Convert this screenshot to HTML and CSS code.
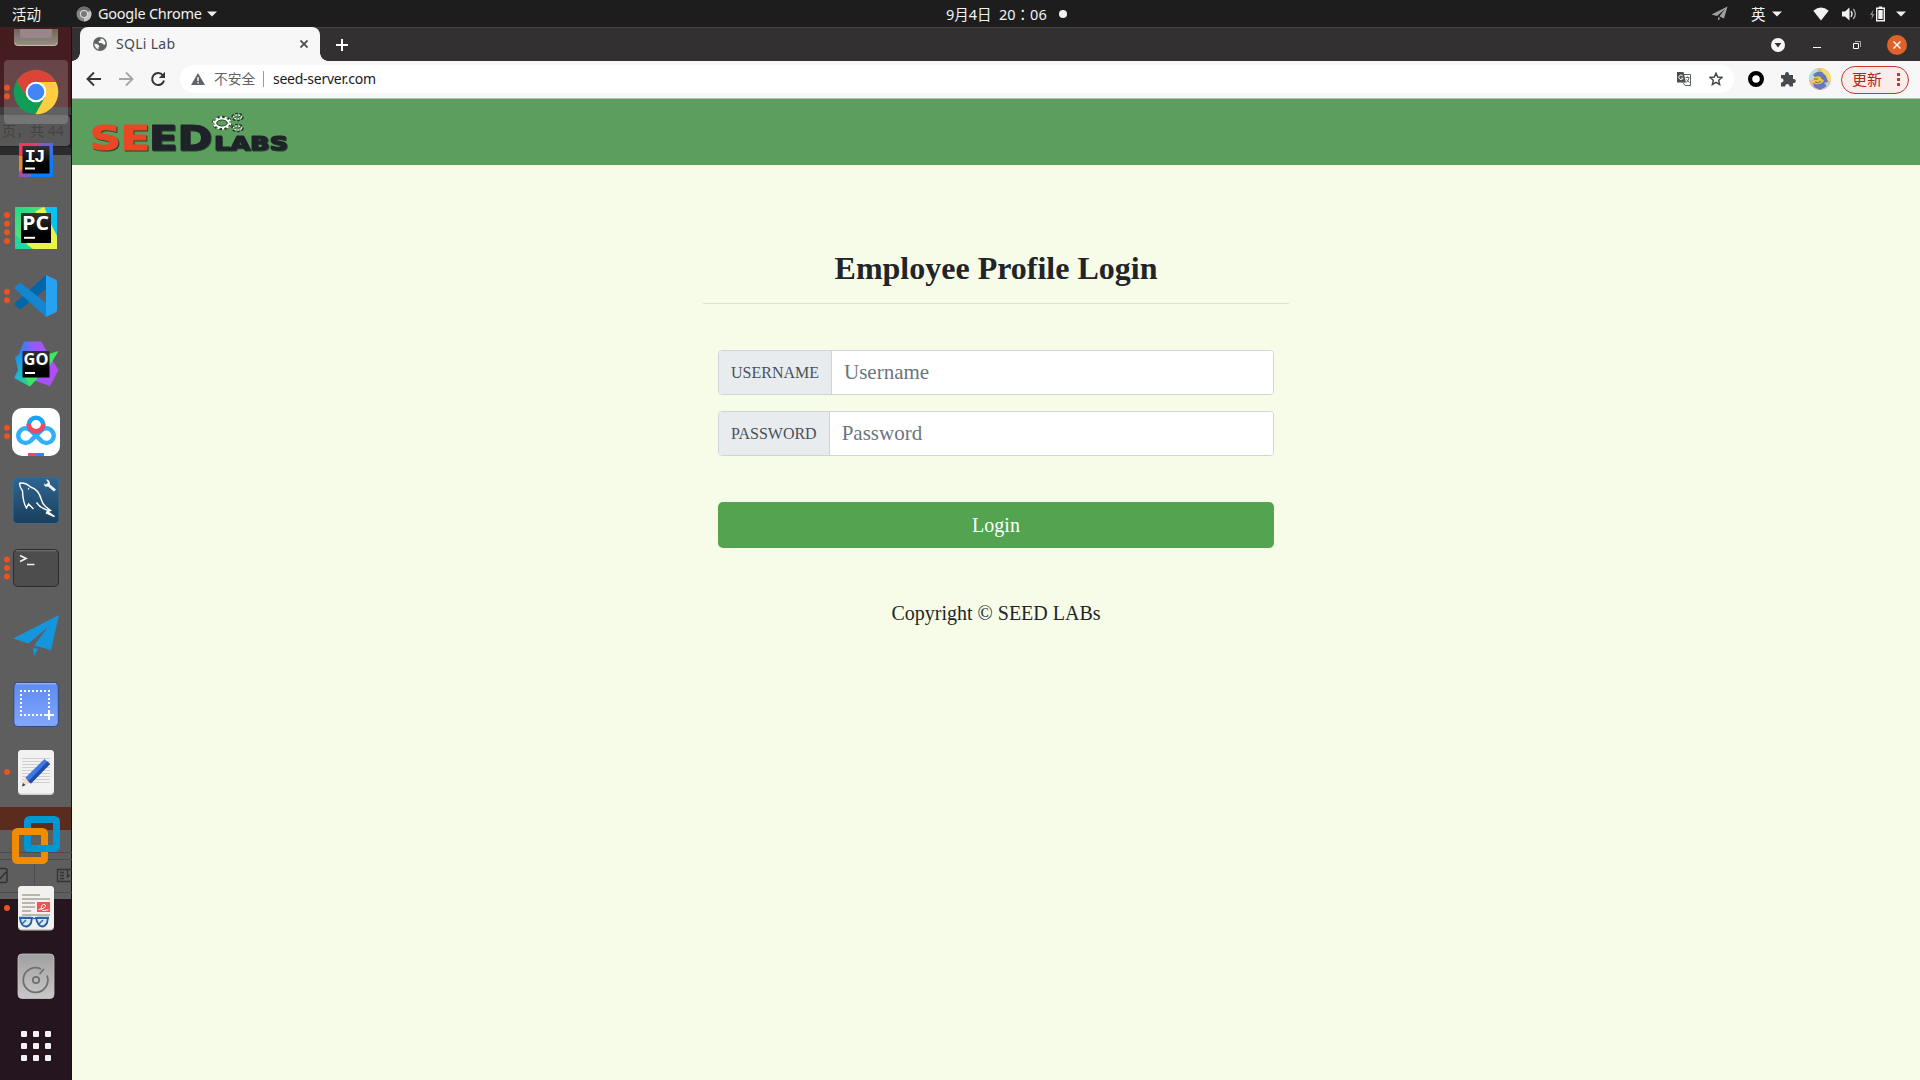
FILE: index.html
```html
<!DOCTYPE html>
<html lang="zh-CN">
<head>
<meta charset="utf-8">
<title>SQLi Lab</title>
<link rel="stylesheet" href="styles.css">
</head>
<body>
<div class="desktop">
  <header class="topbar">
    <div class="topbar-left">
      <span class="activities">活动</span>
      <svg class="app-icon" width="16" height="16" viewBox="0 0 16 16"><circle cx="8" cy="8" r="7.5" fill="#858585"/><path d="M8 8 14.7 4.8A7.5 7.5 0 0 1 8 15.5Z" fill="#c4c4c4"/><path d="M1.5 4.5A7.5 7.5 0 0 1 14.7 4.8H8Z" fill="#6c6c6c"/><circle cx="8" cy="8" r="4" fill="#ddd"/><circle cx="8" cy="8" r="3" fill="#777"/></svg>
      <span class="app-name">Google Chrome</span>
      <svg class="caret" width="10" height="6" viewBox="0 0 10 6"><path d="M0 .5h10L5 5.5z" fill="#f2f2f2"/></svg>
    </div>
    <div class="clock"><span class="date">9月4日</span><span class="time">20：06</span><i class="notice"></i></div>
    <div class="topbar-right">
      <svg width="17" height="15" viewBox="0 0 17 15"><path d="M.5 8.500 16.500.5 13 12.500 8.500 10.200 14 3 6 10Z" fill="#a0a0a0"/><path d="m7 11 2.300 1.200L7.200 14.500Z" fill="#a0a0a0"/></svg>
      <span class="ime">英</span>
      <svg class="caret" width="10" height="6" viewBox="0 0 10 6"><path d="M0 .5h10L5 5.500z" fill="#f2f2f2"/></svg>
      <svg class="wifi" width="16" height="14" viewBox="0 0 16 14"><path d="M.3 3.800Q8-2.800 15.700 3.800L8 13.500Z" fill="#f2f2f2"/></svg>
      <svg class="volume" width="15" height="14" viewBox="0 0 15 14"><path d="M0 4.500h3L7.500.5v13L3 9.500H0z" fill="#f2f2f2"/><path d="M9 4.200q2 2.800 0 5.600" fill="none" stroke="#f2f2f2" stroke-width="1.300"/><path d="M11.300 2q4 5 0 10" fill="none" stroke="#aaa" stroke-width="1.300"/></svg>
      <svg class="battery" width="15" height="16" viewBox="0 0 15 16"><path d="M3.500 3.500 0 9h2l-.5 4.500L4.500 8h-2z" fill="#888"/><path d="M6.700 2.300h7.600v12.500H6.700zM8.800 1.200h3.400" fill="none" stroke="#f2f2f2" stroke-width="1.400"/><path d="M8.300 4h4.400v9H8.300z" fill="#f2f2f2"/></svg>
      <svg class="caret end" width="10" height="6" viewBox="0 0 10 6"><path d="M0 .5h10L5 5.500z" fill="#f2f2f2"/></svg>
    </div>
  </header>

  <div class="workspace">
    <nav class="dock">
      <div class="dock-backdrop">
        <div class="band band-red"></div>
        <div class="band band-dark"></div>
        <div class="band band-page">页，共 44</div>
        <div class="band band-edge"></div>
        <div class="band band-grey"></div>
        <div class="band band-brown"></div>
        <div class="band band-tools"><svg width="72" height="69" viewBox="0 0 72 69"><path d="M0 22.500h72M0 29.500h72M0 62.500h72M34.500 30v32" stroke="#4d4d4d"/><path d="M0 38.500h5q2 0 2 2v10q0 2-2 2H0M0 49l6-7" fill="none" stroke="#333" stroke-width="1.500"/><path d="M72 39.500H57.500v12H72M60 42.500h4m-4 3h4m-4 3h4M67.500 40v7l2.500-2" fill="none" stroke="#333" stroke-width="1.300"/></svg></div>
      </div>
      <svg class="dock-cut" width="72" height="31" viewBox="0 0 72 31"><defs><linearGradient id="drive" y2="1" x2="0"><stop stop-color="#70645c"/><stop offset="1" stop-color="#9a9083"/></linearGradient></defs><path d="M14 2h44v13q0 4-4 4H18q-4 0-4-4z" fill="url(#drive)"/><path d="M15 16q1 2.500 3 2.500h36q2 0 3-2.500" fill="none" stroke="#c4bbae"/><path d="M20 2h32v6q0 3-3 3H23q-3 0-3-3z" fill="#98868a"/></svg>
      <svg class="dock-item" viewBox="0 0 72 68"><rect x="4" y="2" width="64" height="64" rx="4" fill="#fff" fill-opacity=".18"/><circle cx="36" cy="34" r="22.300" fill="#109d58"/><path d="M16.700 23A22.300 22.300 0 0 1 55.300 23H36L27 39Z" fill="#db4437"/><path d="M36 24h19.900A22.300 22.300 0 0 1 35.500 56.300L45 39Z" fill="#ffcd40"/><circle cx="36" cy="34" r="10.300" fill="#fff"/><circle cx="36" cy="34" r="8.300" fill="#4285f4"/><g class="running"><circle cx="7" cy="29.700" r="3"/><circle cx="7" cy="38.300" r="3"/></g></svg>
      <svg class="dock-item" viewBox="0 0 72 68"><defs><linearGradient id="ij" x2="1" y2=".6"><stop offset=".25" stop-color="#fe315d"/><stop offset=".6" stop-color="#765fcb"/><stop offset="1" stop-color="#087cfa"/></linearGradient><linearGradient id="ink" x2="0" y2="1"><stop stop-color="#333"/><stop offset=".7" stop-color="#000"/></linearGradient></defs><path d="M19 17h34v34H19z" fill="url(#ij)"/><path d="M19 30h5v12l-5 4z" fill="#e28b35"/><path d="M46 32h7v19H30z" fill="#087cfa"/><path d="M22.500 20h27v27.500h-27z" fill="url(#ink)"/><text x="24.500" y="35.500" class="mono-mark">IJ</text><path d="M25 42.500h10" stroke="#fff" stroke-width="2"/></svg>
      <svg class="dock-item" viewBox="0 0 72 68"><defs><linearGradient id="pc" x2="1" y2="1"><stop stop-color="#21d789"/><stop offset=".55" stop-color="#68e173"/><stop offset=".6" stop-color="#fcf84a"/><stop offset="1" stop-color="#e6f94c"/></linearGradient></defs><path d="M15 13h42v42H15z" fill="url(#pc)"/><path d="m36 17 8-4 8 18 5 10v14H28z" fill="#e9f34b"/><path d="M45 13h12v29L50 28z" fill="#07c3f2"/><path d="M15 40l6 6 12 9H15z" fill="#21d7a0"/><path d="M21 19h30v30H21z" fill="url(#ink)"/><text x="22" y="36" class="sans-mark" font-size="19" textLength="27" lengthAdjust="spacingAndGlyphs">PC</text><path d="M24 43.800h11" stroke="#fff" stroke-width="2"/><g class="running"><circle cx="7" cy="21" r="3"/><circle cx="7" cy="29.700" r="3"/><circle cx="7" cy="38.300" r="3"/><circle cx="7" cy="47" r="3"/></g></svg>
      <svg class="dock-item" viewBox="0 0 72 68"><path d="m15 43 4 3.500q1.200.8 2.500 0L46 27V13L15.500 40.500q-1.200 1.200-.5 2.500z" fill="#0065a9"/><path d="m15 25 4-3.500q1.200-.8 2.500 0L46 41v14L15.500 27.500q-1.200-1.200-.5-2.500z" fill="#1485cf"/><path d="m46 13 9.500 4.500q1.500.8 1.500 2.500v28q0 1.700-1.500 2.500L46 55z" fill="#27a1f2"/><g class="running"><circle cx="7" cy="29.700" r="3"/><circle cx="7" cy="38.300" r="3"/></g></svg>
      <svg class="dock-item" viewBox="0 0 72 68"><defs><linearGradient id="go" x2="1" y2="0"><stop stop-color="#078efc"/><stop offset=".45" stop-color="#9a59fc"/><stop offset="1" stop-color="#b74af7"/></linearGradient><linearGradient id="goleft" x2="1" y2="1"><stop stop-color="#1a84f8"/><stop offset=".45" stop-color="#1fb8c8"/><stop offset="1" stop-color="#3bea62"/></linearGradient></defs><path d="M24 11.500h17.500L47 22l11.500 18-8.500 16-17-6-12-8-6-14 4-4z" fill="url(#go)"/><path d="m15 27 7-4 1 24h14l-7 9.500-16-8.500 4-8z" fill="url(#goleft)"/><path d="m49 24 9.500-3L49.500 36 45 36zM25 47.500h13.500L30 56z" fill="#3bea62"/><path d="M22.500 21h27v26.500h-27z" fill="url(#ink)"/><text x="23.500" y="35" class="sans-mark" font-size="15.500" textLength="25" lengthAdjust="spacingAndGlyphs">GO</text><path d="M25 43h10" stroke="#fff" stroke-width="2"/></svg>
      <svg class="dock-item" viewBox="0 0 72 68"><rect x="12" y="10" width="48" height="48" rx="10" fill="#fff"/><g fill="none" stroke-width="4.500"><path d="M30.800 42.700A7.300 7.300 0 1 1 31 32.800L41.200 42.700A7.300 7.300 0 1 0 41 32.800L30.800 42.700" stroke="#2eb0fb"/><circle cx="36" cy="27" r="7.300" stroke="#16a4f8"/><path d="M28.700 26a7.300 7.300 0 0 0 14.600 0" stroke="#ef4765"/></g><path d="M28 55h8v3h-8z" fill="#ef4765"/><path d="M36 55h8v3h-8z" fill="#2b87ff"/><g class="running"><circle cx="7" cy="29.700" r="3"/><circle cx="7" cy="38.300" r="3"/></g></svg>
      <svg class="dock-item" viewBox="0 0 72 68"><defs><linearGradient id="sql" x2="0" y2="1"><stop stop-color="#2f6591"/><stop offset="1" stop-color="#193f5c"/></linearGradient></defs><rect x="13" y="11.500" width="46" height="46" rx="4" fill="url(#sql)" stroke="#3a6c91"/><path d="M19.500 17q7-.5 11 4 8 2 11 13 1 4 4 6.500l5 4-3 1 7 5-8-3.500 2-2.500q-8-2-12-8M19.500 17q0 4 3 8 .5 12 4 17l2-4 5 5M28 22.500l1 .5" fill="none" stroke="#fff" stroke-width="1.400"/><path d="m46 13.500 2 3-2 2-2-1q0 4 4 3l6 5 2-2-6-5q0-5-4-5z" fill="#f4f4f4"/></svg>
      <svg class="dock-item" viewBox="0 0 72 68"><rect x="13.500" y="15.500" width="45" height="37" rx="4" fill="#4d4d4d" stroke="#2c2c2c"/><path d="M16 16.800h40" stroke="#777"/><path d="m20 21.500 6 3-6 3M27 30.500h7.500" fill="none" stroke="#f0f0f0" stroke-width="1.700"/><g class="running"><circle cx="7" cy="25.500" r="3"/><circle cx="7" cy="34" r="3"/><circle cx="7" cy="42.500" r="3"/></g></svg>
      <svg class="dock-item" viewBox="0 0 72 68"><path d="M13 36.500 59 13 51 48 34 43.500 48 25 28.500 41.500ZM33 45.500l5 1.500-4 7.500z" fill="#1595db"/></svg>
      <svg class="dock-item" viewBox="0 0 72 68"><defs><linearGradient id="shot" x2="0" y2="1"><stop stop-color="#5d8bf0"/><stop offset="1" stop-color="#83a7ff"/></linearGradient></defs><rect x="13.800" y="12.500" width="44.500" height="44" rx="4" fill="url(#shot)" stroke="#34497c"/><path d="M16 13.800h40" stroke="#a9c1f8"/><path d="M20 21h30M21 24v22M20 45h24M49 24v16" fill="none" stroke="#fff" stroke-width="2" stroke-dasharray="2 2"/><path d="M44 45h10M49 40v10" stroke="#fff" stroke-width="2"/></svg>
      <svg class="dock-item" viewBox="0 0 72 68"><rect x="18" y="12" width="36" height="45" rx="4" fill="#d0d0d0"/><rect x="18" y="12" width="36" height="43.500" rx="4" fill="#f2f2f2"/><path d="M22 20.500h28m-28 3h28m-28 3h28m-28 3h28m-28 3h28m-28 3h28m-28 3h28m-28 3h28m-28 3h28" stroke="#cfcfcf"/><path d="m22 48.500 3-10 7 6z" fill="#fbdcc0"/><path d="m22 48.500 1-3.500 2.500 2z" fill="#333"/><path d="M25.500 39.500 44.500 21l5.500 5-19 19.500-2-1z" fill="#3f78e0"/><path d="M28.500 43 47.500 23.500l2.500 2.500-19 19.500z" fill="#214cae"/><g class="running"><circle cx="7" cy="34" r="3"/></g></svg>
      <svg class="dock-item" viewBox="0 0 72 68"><g fill="none" stroke-width="7"><rect x="27.500" y="13.500" width="29" height="29" rx="2" stroke="#0095d3"/><rect x="15.500" y="25.500" width="29" height="29" rx="2" stroke="#f38b00"/><path d="M27.500 29v11.500q0 2 2 2H48.500" stroke="#0095d3"/></g></svg>
      <svg class="dock-item" viewBox="0 0 72 68"><rect x="18" y="12" width="36" height="44.500" rx="4" fill="#c9c9c9"/><rect x="18" y="12" width="36" height="43" rx="4" fill="#f2f1ef"/><path d="M22 21h18M22 25h28M22 29h13M22 33h13M22 37h9M22 41h28" stroke="#bbb6a9" stroke-width="1.800"/><path d="M37 28h13v10H37z" fill="#ed5353"/><path d="M38.500 35.500q7.500-1 7-4.500-2.500-2-4 1-1.500 5 3 4.500l4-1" fill="none" stroke="#fff"/><path d="M20 44h12l-1 5q-2 3.500-5 3.500-5 0-6-8.500zM36 44h12l-1 5q-2 3.500-5 3.500-4 0-6-8.500z" fill="#dfe5e8" stroke="#1f5da5" stroke-width="1.800"/><path d="M19 43.500h12q3 2 6 0h12M22 50l4-4M39 50l4-4" fill="none" stroke="#2b6ab0" stroke-width="1.500"/><g class="running"><circle cx="7" cy="34" r="3"/></g></svg>
      <svg class="dock-item" viewBox="0 0 72 68"><defs><linearGradient id="disk" x2="0" y2="1"><stop stop-color="#a0a0a0"/><stop offset="1" stop-color="#c8c8c8"/></linearGradient></defs><rect x="18" y="12" width="36" height="44.500" rx="4" fill="url(#disk)" stroke="#c5c5c5" stroke-width=".8"/><path d="M41 27a12.300 12.300 0 1 0 6 6.500M39.500 32l4.500-5" fill="none" stroke="#707070" stroke-width="1.800"/><circle cx="36" cy="38" r="3.200" fill="none" stroke="#707070" stroke-width="1.800"/></svg>
      <svg class="dock-item" viewBox="0 0 72 68"><g fill="#f2f2f2"><rect x="21" y="21" width="6" height="6" rx="1"/><rect x="33" y="21" width="6" height="6" rx="1"/><rect x="45" y="21" width="6" height="6" rx="1"/><rect x="21" y="33" width="6" height="6" rx="1"/><rect x="33" y="33" width="6" height="6" rx="1"/><rect x="45" y="33" width="6" height="6" rx="1"/><rect x="21" y="45" width="6" height="6" rx="1"/><rect x="33" y="45" width="6" height="6" rx="1"/><rect x="45" y="45" width="6" height="6" rx="1"/></g></svg>
    </nav>

    <main class="browser">
      <div class="tabstrip">
        <div class="tab">
          <svg width="14" height="14" viewBox="0 0 14 14"><circle cx="7" cy="7" r="7" fill="#5f6368"/><path d="M7.500 1.500 10 2q2.500 2 2.600 5-1.600 1.300-2.600 0L8.500 6H6l-.5-1.500 2-1zM1.400 6.500 5 7.500l1.500 2-1 1v2Q1.500 11 1.400 6.500z" fill="#f7f7f7"/></svg>
          <span class="tab-title">SQLi Lab</span>
          <svg class="tab-close" width="8" height="8" viewBox="0 0 8 8"><path d="m.5.5 7 7m0-7-7 7" stroke="#45494d" stroke-width="1.700"/></svg>
        </div>
        <svg class="new-tab" width="12" height="12" viewBox="0 0 12 12"><path d="M6 0v12M0 6h12" stroke="#fff" stroke-width="2"/></svg>
        <div class="window-controls">
          <svg width="14" height="14" viewBox="0 0 14 14"><circle cx="7" cy="7" r="7" fill="#f7f7f7"/><path d="M3.700 5h6.600L7 9.400z" fill="#333"/></svg>
          <svg width="8" height="14" viewBox="0 0 8 14"><path d="M0 9.500h8" stroke="#fff"/></svg>
          <svg width="8" height="8" viewBox="0 0 8 8"><path d="M.5 2.500h5v5h-5z" fill="none" stroke="#fff"/><path d="M2 .5h5.500V6" fill="none" stroke="#aaa"/></svg>
          <svg width="20" height="20" viewBox="0 0 20 20"><circle cx="10" cy="10" r="10" fill="#e0622b"/><path d="m6.500 6.500 7 7m0-7-7 7" stroke="#fff" stroke-width="1.400"/></svg>
        </div>
      </div>

      <div class="toolbar">
        <svg class="nav-icon" width="16" height="16" viewBox="0 0 16 16"><path d="M15 8H2M8 1.500 1.500 8 8 14.500" fill="none" stroke="#333639" stroke-width="1.900"/></svg>
        <svg class="nav-icon" width="16" height="16" viewBox="0 0 16 16"><path d="M1 8h13M8 1.500 14.500 8 8 14.500" fill="none" stroke="#a6a6a6" stroke-width="1.900"/></svg>
        <svg class="nav-icon" width="16" height="16" viewBox="0 0 16 16"><path d="M13 4.500A6 6 0 1 0 14 9.500" fill="none" stroke="#333639" stroke-width="2"/><path d="M15 .8V7H8.800z" fill="#333639"/></svg>
        <div class="omnibox">
          <svg width="14" height="12" viewBox="0 0 14 12"><path d="M7 0l7 12H0z" fill="#5f6368"/><path d="M7 4v4M7 9v1.500" stroke="#fff" stroke-width="1.400"/></svg>
          <span class="insecure">不安全</span>
          <i class="divider"></i>
          <span class="url">seed-server.com</span>
          <svg class="translate" width="14" height="14" viewBox="0 0 14 14"><path d="M6.500 2.500h7v11H8L6 10.500" fill="#fff" stroke="#5f6368"/><path d="M8.500 5.500h4M10.500 4.500v1M12 6q-.5 3-3 4.500M9.500 7.500l3 3" fill="none" stroke="#5f6368"/><path d="M0 0h6.500L9 10.500H0z" fill="#4b4f53"/><path d="M5.800 4a2.200 2.200 0 1 0 .3 2.200H4.200" fill="none" stroke="#fff"/></svg>
          <svg width="14" height="14" viewBox="0 0 14 14"><path d="m7 1.200 1.700 3.900 4.200.4-3.200 2.800.9 4.200L7 10.300l-3.600 2.200.9-4.200L1.100 5.500l4.200-.4z" fill="none" stroke="#45494d" stroke-width="1.500"/></svg>
        </div>
        <svg class="ring" width="16" height="16" viewBox="0 0 16 16"><circle cx="8" cy="8" r="5.900" fill="#fff" stroke="#000" stroke-width="4.200"/></svg>
        <svg class="puzzle" width="16" height="16" viewBox="0 0 16 16"><path d="M1 4h4V3a2 2 0 0 1 4 0v1h4v4h.8a2 2 0 0 1 0 4H13v3.500H9.500v-.8a2.200 2.200 0 0 0-4.300 0v.8H1v-4h.8a2.200 2.200 0 0 0 0-4.300H1z" fill="#45494d"/></svg>
        <svg class="avatar" width="22" height="22" viewBox="0 0 22 22"><defs><clipPath id="round"><circle cx="11" cy="11" r="11"/></clipPath></defs><g clip-path="url(#round)"><path d="M0 0h22v22H0z" fill="#efb79a"/><path d="M0 3 9 0v5L3 12H0z" fill="#b5dfe0"/><path d="M12 0h10v14l-7-5z" fill="#f2dc78"/><path d="M4 7q4-5 9-3l4 4 2 6-4 1-6-3z" fill="#6677b5"/><path d="m9 2 4-1-2 3z" fill="#e5c442"/><path d="M3 11q5-5 10-1l2 3-4 3-6-1z" fill="#e8ca50"/><path d="M4 15q6 3 10-1l4 4-7 4-6-3z" fill="#6577c6"/><path d="M5 11h4M12 10l2 1M6 14q4 2 6-1" stroke="#55502e" stroke-width=".8" fill="none"/><path d="m17 14 5 3v5h-5zM0 14l4 4v4H0z" fill="#a8d6dc"/></g></svg>
        <button class="update">更新<svg width="3" height="13" viewBox="0 0 3 13"><path d="M0 0h3v3H0zM0 5h3v3H0zM0 10h3v3H0z" fill="#c5362c"/></svg></button>
      </div>

      <section class="page">
        <div class="navbar">
          <svg class="logo" width="202" height="44" viewBox="0 0 202 44">
            <g class="logo-text">
              <text class="logo-se" x="0" y="39" font-size="33" textLength="60" lengthAdjust="spacingAndGlyphs">SE</text>
              <text class="logo-ed" x="59" y="39" font-size="33" textLength="63" lengthAdjust="spacingAndGlyphs">ED</text>
              <text class="logo-ed" x="124" y="39" font-size="19" textLength="74" lengthAdjust="spacingAndGlyphs">LABS</text>
            </g>
            <g fill="none"><ellipse cx="132" cy="12" rx="8.500" ry="5.500" stroke="#26352a" stroke-width="3.500" stroke-dasharray="3 2.500"/><ellipse cx="132" cy="12" rx="8.200" ry="5.400" stroke="#fff" stroke-width="2.400" stroke-dasharray="2 2.320"/><ellipse cx="132" cy="12" rx="6.700" ry="4.200" stroke="#fff" stroke-width="1.800"/><ellipse cx="132" cy="12" rx="5.200" ry="3" stroke="#26352a" stroke-width=".8"/><g stroke="#26352a" stroke-width="3.600" stroke-dasharray="2.200 1.400"><ellipse cx="147.500" cy="6" rx="4.500" ry="2.500"/><ellipse cx="147.500" cy="17" rx="4.500" ry="2.500"/></g><g stroke="#e4ebe4" stroke-width="1.500"><ellipse cx="147.500" cy="6" rx="4" ry="2" stroke-dasharray="2 1"/><ellipse cx="147.500" cy="17" rx="4" ry="2" stroke-dasharray="2 1"/></g></g>
          </svg>
        </div>
        <div class="login">
          <h1>Employee Profile Login</h1>
          <hr>
          <form class="login-form">
            <div class="field"><label for="user">USERNAME</label><input id="user" type="text" placeholder="Username"></div>
            <div class="field"><label for="pass">PASSWORD</label><input id="pass" type="password" placeholder="Password"></div>
            <button class="submit" type="button">Login</button>
          </form>
          <p class="copyright">Copyright © SEED LABs</p>
        </div>
      </section>
    </main>
  </div>
</div>
</body>
</html>
```

FILE: styles.css
```css
* { box-sizing: border-box; }
body { margin: 0; overflow: hidden; font-family: "Noto Sans", "Noto Sans CJK SC", sans-serif; }
svg { display: block; flex: none; }
.desktop { width: 1920px; height: 1080px; display: flex; flex-direction: column; }

.topbar { height: 27px; flex: none; background: #1d1d1d; color: #f2f2f2; display: grid; grid-template-columns: 946px 1fr 209px; align-items: center; font-size: 14.5px; line-height: 26px; white-space: nowrap; }
.topbar-left, .topbar-right, .clock { display: flex; align-items: center; height: 26px; }
.activities { width: 64px; padding-left: 12px; }
.app-icon { margin-left: 12px; }
.app-name { width: 109px; height: 27px; margin-left: 6px; letter-spacing: -.25px; }
.date { width: 53px; }
.time { width: 59px; font-family: "Noto Sans", "Noto Sans CJK JP", sans-serif; }
.notice { width: 8px; height: 8px; margin-left: 1px; border-radius: 50%; background: #f2f2f2; }
.ime { width: 21px; margin-left: 23px; }
.wifi { margin-left: 31px; }
.volume { margin-left: 13px; }
.battery { margin-left: 13px; }
.end { margin-left: 11px; }

.workspace { flex: 1; display: flex; min-height: 0; }
.dock { position: relative; width: 72px; flex: none; background: #24151f; overflow: hidden; }
.dock-backdrop { position: absolute; inset: 0; border-right: 1px solid rgba(0,0,0,.25); }
.band-red { height: 80px; background: linear-gradient(#431c20, #491f23); }
.band-dark { height: 8px; background: #3e3d3d; }
.band-page { width: 70px; height: 32px; padding-left: 2px; background: #575757; border-bottom: 1px solid #222; border-radius: 0 4px 4px 0; color: #434343; font-size: 14px; line-height: 32px; white-space: nowrap; }
.band-edge { height: 8px; background: #2b2b2b; }
.band-grey { height: 652px; background: #5e5e5e; }
.band-brown { height: 23px; background: #5b2c1d; }
.band-tools { height: 69px; background: #5e5e5e; }
.dock-cut, .dock-item { position: relative; width: 72px; }
.dock-item { height: 68px; }
.running { fill: #e95420; }
.mono-mark { font: bold 19px "Liberation Mono", monospace; fill: #fff; letter-spacing: -2px; }
.sans-mark { font-family: "Open Sans", sans-serif; font-weight: bold; fill: #fff; }

.browser { flex: 1; display: flex; flex-direction: column; min-width: 0; }
.tabstrip { height: 34px; flex: none; background: #333031; border-top: 1px solid #454344; display: flex; align-items: center; padding-left: 8px; }
.tab { position: relative; width: 240px; height: 34px; margin-top: -1px; border-radius: 8px 8px 0 0; background: #f7f7f7; display: flex; align-items: center; padding: 0 12px 0 13px; color: #45494d; }
.tab::before, .tab::after { content: ""; position: absolute; bottom: 0; width: 8px; height: 8px; }
.tab::before { left: -8px; background: radial-gradient(circle at 0 0, #333031 7.5px, #f7f7f7 8px); }
.tab::after { right: -8px; background: radial-gradient(circle at 100% 0, #333031 7.5px, #f7f7f7 8px); }
.tab-title { margin-left: 9px; padding-bottom: 2px; font-size: 14px; letter-spacing: .3px; }
.tab-close { margin-left: auto; }
.new-tab { margin-left: 16px; }
.window-controls { margin-left: auto; padding-right: 13px; display: flex; align-items: center; }
.window-controls svg:nth-child(2) { margin-left: 28px; }
.window-controls svg:nth-child(3) { margin-left: 32px; }
.window-controls svg:nth-child(4) { margin-left: 26px; }

.toolbar { height: 38px; flex: none; background: #f7f7f7; border-bottom: 1px solid #bdbdbd; display: flex; align-items: center; padding: 0 11px 1px 14px; }
.nav-icon { margin-right: 16px; }
.nav-icon:nth-child(3) { margin-right: 14px; }
.omnibox { width: 1554px; height: 28px; border-radius: 14px; background: #fff; display: flex; align-items: center; padding: 0 11px; font-size: 14px; }
.insecure { width: 49px; margin-left: 9px; padding-bottom: 2px; color: #5f6368; font-size: 13.800px; white-space: nowrap; }
.divider { width: 1px; height: 16px; background: #9a9da0; }
.url { margin-left: 9px; padding-bottom: 2px; color: #1a1a1a; letter-spacing: -.25px; }
.translate { margin-left: auto; margin-right: 18px; }
.ring { margin-left: 14px; }
.puzzle { margin-left: 16px; }
.avatar { margin-left: 13px; }
.update { width: 68px; height: 28px; margin: 1px 0 0 10px; padding: 0 8px 2px 10px; border: 1px solid #c5362c; border-radius: 14px; background: #f9eceb; color: #b3261e; font: 15px "Noto Sans", "Noto Sans CJK SC", sans-serif; display: flex; align-items: center; justify-content: space-between; white-space: nowrap; }
.update svg { margin-top: 2px; }

.page { flex: 1; background: #f7fce8; color: #212529; font-family: "Liberation Serif", serif; }
.navbar { height: 66px; background: #5b9e5d; padding: 12px 0 0 18px; }
.logo { overflow: visible; }
.logo-text { font-family: "DejaVu Sans", sans-serif; font-weight: bold; stroke-width: 1.200; stroke-linejoin: round; filter: drop-shadow(1px 1px .6px #24442a); }
.logo-se { fill: #ea4825; stroke: #ea4825; }
.logo-ed { fill: #20222a; stroke: #20222a; }
.login { width: 586px; margin: 0 auto; padding-top: 84px; display: flex; flex-direction: column; }
h1 { margin: 0; text-align: center; font-size: 32px; line-height: 38px; font-weight: bold; }
hr { width: 100%; height: 1px; margin: 16px 0 46px; border: 0; background: #dfe3d2; }
.login-form { padding: 0 15px; display: flex; flex-direction: column; }
.field { height: 45px; margin-bottom: 16px; display: flex; border: 1px solid #ced4da; border-radius: 4px; background: #fff; overflow: hidden; }
.field label { padding: 0 12px; border-right: 1px solid #ced4da; background: #e9ecef; color: #495057; font-size: 16px; line-height: 43px; }
.field input { flex: 1; min-width: 0; border: 0; padding: 0 12px; font: 21px "Liberation Serif", serif; outline: 0; }
.field input::placeholder { color: #6c757d; opacity: 1; }
.submit { height: 46px; margin-top: 30px; border: 0; border-radius: 5px; background: #53a350; color: #fff; font: 20px "Liberation Serif", serif; }
.copyright { margin: 50px 0 0; text-align: center; font-size: 20px; line-height: 30px; }
```
